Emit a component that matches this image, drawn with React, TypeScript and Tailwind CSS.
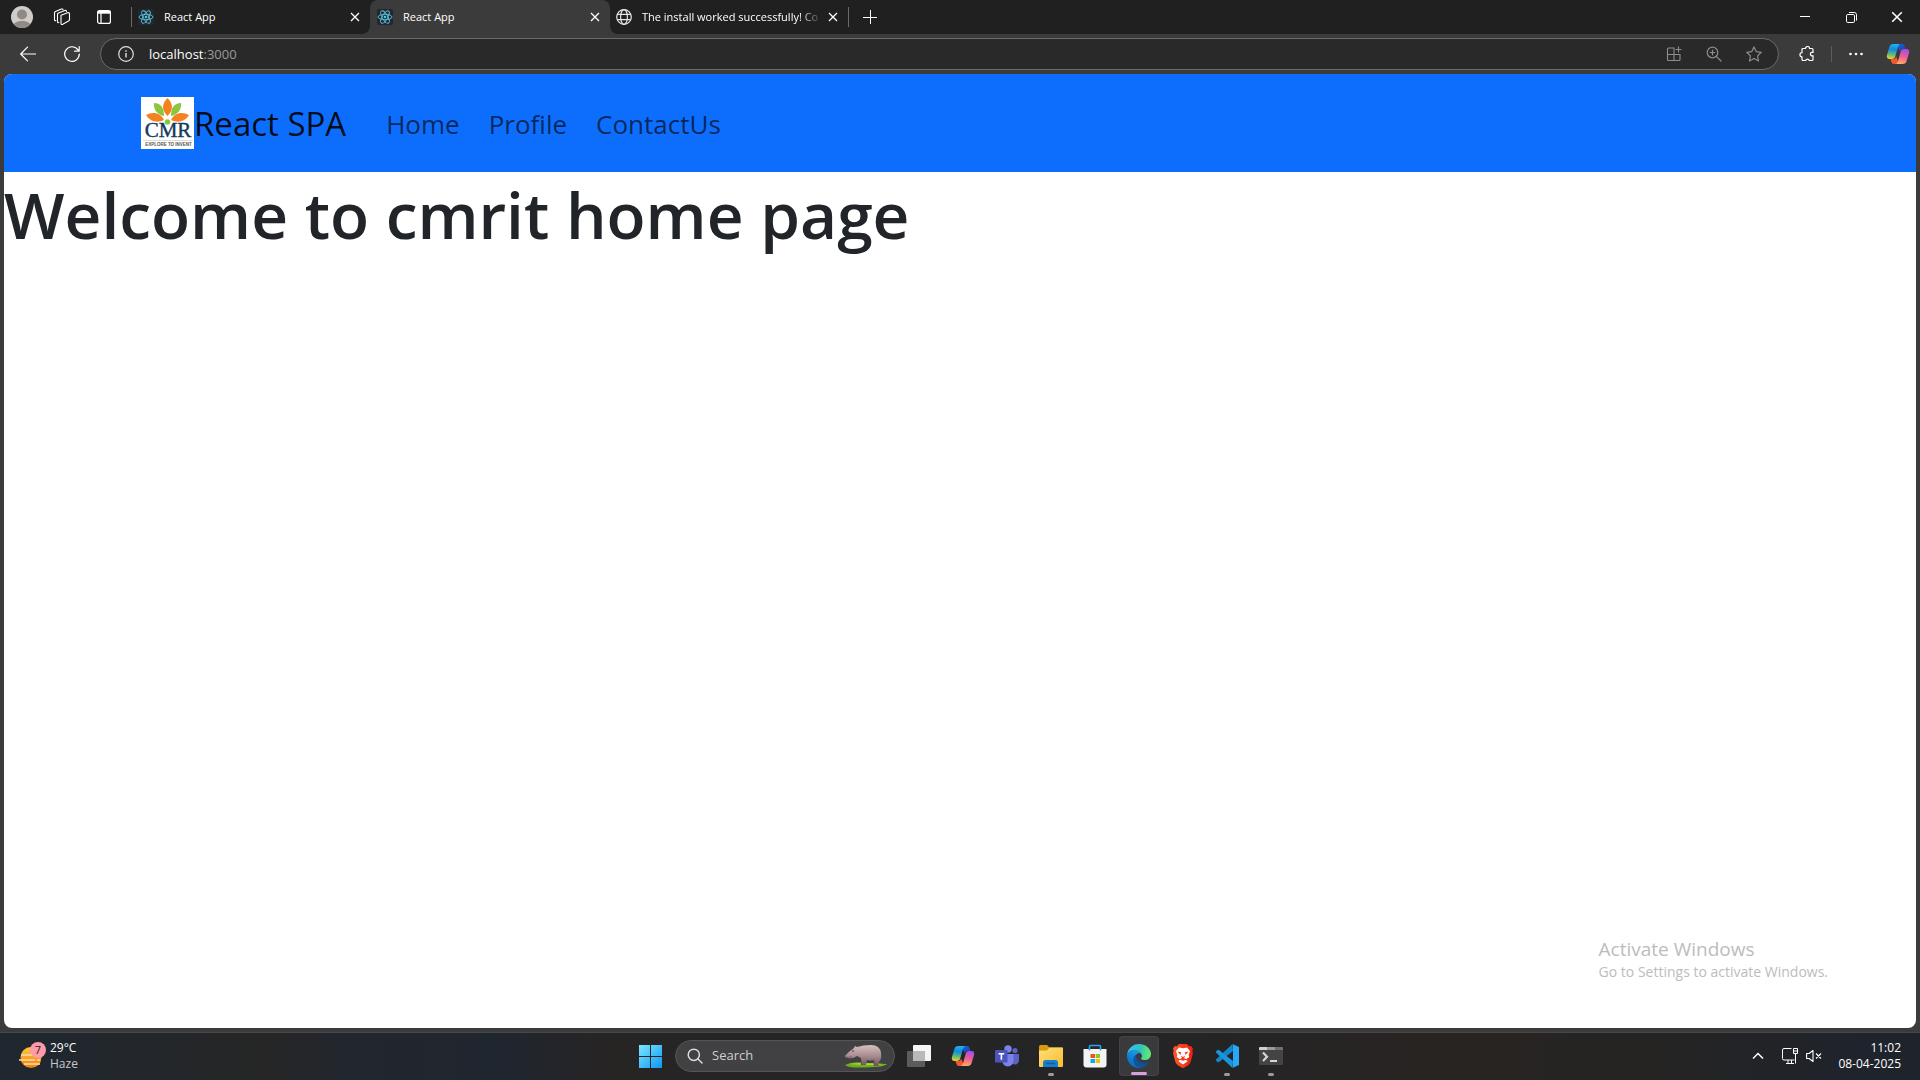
import React, { useState } from "react";

type IconProps = { className?: string };

function ReactLogo() {
  return (
    <svg viewBox="0 0 16 16" className="size-4 shrink-0" fill="none" stroke="#58c4dc" strokeWidth="0.9" aria-hidden="true">
      <rect width="16" height="16" rx="1.5" fill="#23272f" stroke="none" />
      <ellipse cx="8" cy="8" rx="7" ry="2.7" />
      <ellipse cx="8" cy="8" rx="7" ry="2.7" transform="rotate(60 8 8)" />
      <ellipse cx="8" cy="8" rx="7" ry="2.7" transform="rotate(120 8 8)" />
      <circle cx="8" cy="8" r="1.3" fill="#58c4dc" stroke="none" />
    </svg>
  );
}

function GlobeIcon() {
  return (
    <svg viewBox="0 0 16 16" className="size-4 shrink-0" fill="none" stroke="#e6e6e6" strokeWidth="1.2" aria-hidden="true">
      <circle cx="8" cy="8" r="7.3" />
      <ellipse cx="8" cy="8" rx="3.4" ry="7.3" />
      <path d="M1.4 5.4h13.2M1.4 10.6h13.2" />
    </svg>
  );
}

function CloseIcon({ className }: IconProps) {
  return (
    <svg viewBox="0 0 10 10" className={className} fill="none" stroke="currentColor" strokeWidth="1.3" aria-hidden="true">
      <path d="M1 1l8 8M9 1l-8 8" />
    </svg>
  );
}

function CopilotIcon({ className }: IconProps) {
  return (
    <svg viewBox="0 0 24 24" className={className} aria-hidden="true">
      <defs>
        <linearGradient id="cpA" x1="0.4" y1="0" x2="0.3" y2="1">
          <stop offset="0" stopColor="#19b4f2" />
          <stop offset="0.35" stopColor="#1488e0" />
          <stop offset="0.65" stopColor="#4cb58a" />
          <stop offset="1" stopColor="#f5d020" />
        </linearGradient>
        <linearGradient id="cpB" x1="0.6" y1="0" x2="0.4" y2="1">
          <stop offset="0" stopColor="#a04de8" />
          <stop offset="0.5" stopColor="#ee5c95" />
          <stop offset="1" stopColor="#ffab62" />
        </linearGradient>
        <linearGradient id="cpC" x1="0" y1="0" x2="1" y2="1">
          <stop offset="0" stopColor="#1a66d8" />
          <stop offset="1" stopColor="#1a3fae" />
        </linearGradient>
      </defs>
      <path d="M11 2h5.2c1.3 0 2 .7 2.4 2l.9 3h-2.4c-2 0-2.8.9-3.3 2.6L12 5z" fill="url(#cpC)" />
      <path d="M13 22H7.8c-1.3 0-2-.7-2.4-2l-.9-3h2.4c2 0 2.8-.9 3.3-2.6L12 19z" fill="#f2572f" />
      <path d="M7.5 2h7c-1.4.3-2 1.2-2.5 2.8L9.4 14c-.7 2.2-1.6 3-3.6 3H3.4C1.2 17 .4 15.300.9 13.300l2.400-8.100C4 3 5 2 7.500 2z" fill="url(#cpA)" />
      <path d="M16.500 22h-7c1.400-.3 2-1.200 2.500-2.800l2.600-9.200c.7-2.200 1.600-3 3.600-3h2.400c2.200 0 3 1.700 2.500 3.700l-2.400 8.100C20 21 19 22 16.500 22z" fill="url(#cpB)" />
    </svg>
  );
}

function TabFlare({ side }: { side: "left" | "right" }) {
  return (
    <svg
      viewBox="0 0 8 8"
      className={side === "left" ? "absolute right-full bottom-0 size-2" : "absolute bottom-0 left-full size-2"}
      fill="#3b3b3b"
      aria-hidden="true"
    >
      <path d={side === "left" ? "M8 0v8H0a8 8 0 0 0 8-8z" : "M0 0v8h8a8 8 0 0 1-8-8z"} />
    </svg>
  );
}

function BrowserTab({ title, icon, active = false, faded = false }: { title: string; icon: React.ReactNode; active?: boolean; faded?: boolean }) {
  return (
    <div
      className={
        active
          ? "relative flex h-full w-60 items-center gap-2.5 rounded-t-lg bg-[#3b3b3b] pr-[7px] pl-[7px]"
          : "flex h-full w-[238px] items-center gap-2.5 pr-[7px] pl-[6px]"
      }
    >
      {active && <TabFlare side="left" />}
      {icon}
      <span
        className={
          faded
            ? "flex-1 text-[11px] whitespace-nowrap text-white [mask-image:linear-gradient(to_right,black_calc(100%-24px),transparent)]"
            : "flex-1 text-[11px] whitespace-nowrap text-white"
        }
      >
        {title}
      </span>
      <button type="button" aria-label={`Close ${title}`} className="-ml-2 grid size-4 place-items-center text-white">
        <CloseIcon className="size-2.5" />
      </button>
      {active && <TabFlare side="right" />}
    </div>
  );
}

function TabStrip() {
  return (
    <div className="flex h-[34px] items-center bg-[#202020] text-white">
      <button type="button" aria-label="Profile" className="ml-[11px] grid place-items-center">
        <svg viewBox="0 0 22 22" className="size-[22px]" aria-hidden="true">
          <clipPath id="avatar"><circle cx="11" cy="11" r="11" /></clipPath>
          <g clipPath="url(#avatar)">
            <rect width="22" height="22" fill="#cfccc9" />
            <circle cx="11" cy="8.500" r="5" fill="#8f8a86" />
            <path d="M2 22c0-5 3-7 9-7s9 2 9 7z" fill="#8f8a86" />
          </g>
        </svg>
      </button>
      <button type="button" aria-label="Workspaces" className="ml-5 grid place-items-center">
        <svg viewBox="0 0 18 18" className="size-[18px]" fill="none" stroke="currentColor" strokeWidth="1.100" strokeLinejoin="round" strokeLinecap="round" aria-hidden="true">
          <path d="M8 7.200l6.500-2.500q2-.5 2 1.300v5.500q0 1-1 1.500l-5.700 3.300q-1.800.8-1.800-1z" />
          <path d="M5.800 14.600q-1.300.5-1.300-1V6.500q0-1 1-1.500l6.300-2.500q1.500-.4 1.700 1" />
          <path d="M2.800 12.600Q1.500 13 1.500 11.500V5q0-1 1-1.500l5.800-2.400q1.500-.5 1.800.8" />
        </svg>
      </button>
      <button type="button" aria-label="Tab actions menu" className="ml-[25px] grid place-items-center">
        <svg viewBox="0 0 16 16" className="size-4" fill="none" stroke="currentColor" strokeWidth="1.200" aria-hidden="true">
          <rect x="1.600" y="1.600" width="12.800" height="12.800" rx="2" />
          <path d="M1.600 3.200h12.800" strokeWidth="3" />
          <path d="M5 4v10" />
        </svg>
      </button>
      <span className="ml-[19px] h-5 w-px bg-[#6b6b6b]" />
      <BrowserTab title="React App" icon={<ReactLogo />} />
      <BrowserTab title="React App" icon={<ReactLogo />} active />
      <BrowserTab title="The install worked successfully! Co" icon={<GlobeIcon />} faded />
      <span className="h-5 w-px bg-[#6b6b6b]" />
      <button type="button" aria-label="New tab" className="ml-3.5 grid place-items-center">
        <svg viewBox="0 0 14 14" className="size-3.5" stroke="currentColor" strokeWidth="1" aria-hidden="true">
          <path d="M7.500 0v14M0 7.500h14" />
        </svg>
      </button>
      <div className="ml-auto flex h-full">
        <button type="button" aria-label="Minimize" className="grid w-[46px] place-items-center">
          <svg viewBox="0 0 10 10" className="size-2.5" stroke="currentColor" aria-hidden="true"><path d="M0 4.500h10" /></svg>
        </button>
        <button type="button" aria-label="Restore" className="grid w-[46px] place-items-center">
          <svg viewBox="0 0 11 11" className="size-[11px]" fill="none" stroke="currentColor" aria-hidden="true">
            <rect x="0.500" y="2.500" width="8" height="8" rx="1.300" />
            <path d="M3 .5h5.300q2.200 0 2.200 2.200V8.500" />
          </svg>
        </button>
        <button type="button" aria-label="Close window" className="grid w-[46px] place-items-center">
          <CloseIcon className="size-3" />
        </button>
      </div>
    </div>
  );
}

function Toolbar() {
  const [url, setUrl] = useState("localhost:3000");
  const [host, port] = url.split(/(?=:)/);
  return (
    <div className="flex h-10 items-center bg-[#3b3b3b] pl-5 text-white">
      <button type="button" aria-label="Back">
        <svg viewBox="0 0 16 16" className="size-4" fill="none" stroke="currentColor" strokeWidth="1.200" strokeLinecap="round" strokeLinejoin="round" aria-hidden="true">
          <path d="M15.500 8H.8M7.500 1.200L.7 8l6.800 6.800" />
        </svg>
      </button>
      <button type="button" aria-label="Refresh" className="ml-7">
        <svg viewBox="0 0 16 16" className="size-4" fill="none" stroke="currentColor" strokeWidth="1.200" strokeLinecap="round" strokeLinejoin="round" aria-hidden="true">
          <path d="M15.300 8A7.300 7.300 0 1 1 13.800 3.600L15 5M15.200.6V5.200H10.600" />
        </svg>
      </button>
      <div className="relative ml-5 flex h-8 flex-1 items-center rounded-full border border-[#6b6b6b] bg-[#292929] pr-4 pl-[17px]">
        <svg viewBox="0 0 16 16" className="size-4 shrink-0" fill="none" stroke="#e0e0e0" strokeWidth="1.200" aria-hidden="true">
          <circle cx="8" cy="8" r="7.300" />
          <path d="M8 7v4.500M8 4.300v1.400" strokeWidth="1.400" />
        </svg>
        <label className="relative ml-[15px] block h-5 flex-1 text-[13px] leading-5">
          <span className="pointer-events-none absolute inset-0 whitespace-pre">
            {host}
            <span className="text-[#9a9a9a]">{port}</span>
          </span>
          <input
            aria-label="Address"
            value={url}
            onChange={(e) => setUrl(e.target.value)}
            className="block w-full bg-transparent text-transparent caret-white outline-none"
          />
        </label>
        <div className="flex items-center gap-6 text-[#8d8d8d]">
          <button type="button" aria-label="App available">
            <svg viewBox="0 0 16 16" className="size-4" fill="none" stroke="currentColor" strokeWidth="1.100" aria-hidden="true">
              <path d="M8 8V2H2.500Q1.500 2 1.500 3v10.500q0 1 1 1H13q1 0 1-1V8.500H1.500M8 8v6.500M12.500 .5v6M9.500 3.500h6" />
            </svg>
          </button>
          <button type="button" aria-label="Zoom">
            <svg viewBox="0 0 16 16" className="size-4" fill="none" stroke="currentColor" strokeWidth="1.200" strokeLinecap="round" aria-hidden="true">
              <circle cx="6.500" cy="6.500" r="5.300" />
              <path d="M10.300 10.300l4.700 4.700M6.500 4.200v4.600M4.200 6.500h4.600" />
            </svg>
          </button>
          <button type="button" aria-label="Add to favorites">
            <svg viewBox="0 0 16 16" className="size-4" fill="none" stroke="currentColor" strokeWidth="1.200" strokeLinejoin="round" aria-hidden="true">
              <path d="M8 .9l2.200 4.700 5.100.7-3.700 3.600.9 5.200L8 12.600l-4.500 2.500.9-5.200L.7 6.300l5.100-.7z" />
            </svg>
          </button>
        </div>
      </div>
      <button type="button" aria-label="Extensions" className="ml-5">
        <svg viewBox="0 0 16 16" className="size-4" fill="none" stroke="currentColor" strokeWidth="1.200" strokeLinejoin="round" aria-hidden="true">
          <path d="M6.500 2.500a2 2 0 0 1 4 0h2.500q1 0 1 1v3a1.800 1.800 0 1 0 0 3.200v3.800q0 1-1 1h-2.700a1.900 1.900 0 0 0-3.600 0H4q-1 0-1-1v-2.700a2 2 0 0 1 0-4.100V3.500q0-1 1-1z" />
        </svg>
      </button>
      <span className="ml-4 h-4 w-px bg-[#5c5c5c]" />
      <button type="button" aria-label="Settings and more" className="ml-4">
        <svg viewBox="0 0 16 16" className="size-4" fill="currentColor" aria-hidden="true">
          <circle cx="2.500" cy="8" r="1.300" />
          <circle cx="8" cy="8" r="1.300" />
          <circle cx="13.500" cy="8" r="1.300" />
        </svg>
      </button>
      <button type="button" aria-label="Copilot" className="mr-2.5 ml-[22px]">
        <CopilotIcon className="size-6" />
      </button>
    </div>
  );
}

function CmrLogo() {
  return (
    <svg viewBox="0 0 53 52" className="h-[52px] w-[53px]" role="img" aria-label="CMR">
      <rect width="53" height="52" fill="#fff" />
      <path d="M13 6c7 0 10 5 10 13-6-1-11-6-10-13z" fill="#8cc63f" />
      <path d="M40 6c-7 0-10 5-10 13 6-1 11-6 10-13z" fill="#8cc63f" />
      <path d="M26.500 1c6 6 6 12 0 18-6-6-6-12 0-18z" fill="#f58220" />
      <path d="M5 18c7-4 15-2 18 5-7 3.500-14 1.500-18-5z" fill="#f58220" />
      <path d="M48 18c-7-4-15-2-18 5 7 3.500 14 1.500 18-5z" fill="#f58220" />
      <circle cx="26.500" cy="25" r="2.800" fill="#8cc63f" />
      <text x="27" y="40" textAnchor="middle" fontFamily="'Liberation Serif', serif" fontSize="21" fill="#123a5c" stroke="#123a5c" strokeWidth="0.400">CMR</text>
      <path d="M2 43.500h50" stroke="#e3c9b0" strokeWidth="0.700" />
      <text x="27.500" y="49" textAnchor="middle" fontFamily="'Liberation Sans', sans-serif" fontSize="4.500" fontWeight="700" fill="#555">EXPLORE TO INVENT</text>
    </svg>
  );
}

function Page() {
  return (
    <main className="relative mx-1 flex-1 overflow-hidden rounded-lg bg-white">
      <nav className="flex h-[98px] items-center bg-[#0d6efd] pl-[137px]">
        <a href="#home" className="flex items-center text-[33px] leading-[54px] text-black/90">
          <CmrLogo />
          <span className="pt-0.5">React SPA</span>
        </a>
        <ul className="ml-10 flex gap-[29px] pt-0.5 text-[26px] leading-10 text-black/65">
          <li><a href="#home">Home</a></li>
          <li><a href="#profile">Profile</a></li>
          <li><a href="#contact">ContactUs</a></li>
        </ul>
      </nav>
      <h1 className="text-[64px] leading-[86px] font-semibold text-[#212529]">Welcome to cmrit home page</h1>
      <aside className="absolute right-[88px] bottom-[45px] text-[#bcbcbc]">
        <p className="text-[19px] leading-6">Activate Windows</p>
        <p className="text-sm leading-[22px]">Go to Settings to activate Windows.</p>
      </aside>
    </main>
  );
}

function TaskButton({ label, running = false, active = false, children }: { label: string; running?: boolean; active?: boolean; children: React.ReactNode }) {
  return (
    <button
      type="button"
      aria-label={label}
      className={
        active
          ? "relative grid size-10 place-items-center rounded border border-white/5 bg-white/10"
          : "relative grid size-10 place-items-center"
      }
    >
      {children}
      {active && <span className="absolute bottom-0 left-1/2 h-[3px] w-4 -translate-x-1/2 rounded-full bg-[#d9a0e0]" />}
      {running && <span className="absolute bottom-0 left-1/2 h-[3px] w-1.5 -translate-x-1/2 rounded-full bg-[#9b9b9b]" />}
    </button>
  );
}

function WindowsIcon() {
  return (
    <svg viewBox="0 0 24 24" className="size-6" aria-hidden="true">
      <defs>
        <linearGradient id="win" x1="0" y1="0" x2="24" y2="24" gradientUnits="userSpaceOnUse">
          <stop offset="0" stopColor="#7ceaff" />
          <stop offset="1" stopColor="#0c94f5" />
        </linearGradient>
      </defs>
      <path d="M0 1h11v11H0zM12 1h11v11H12zM0 13h11v11H0zM12 13h11v11H12z" fill="url(#win)" />
    </svg>
  );
}

function HippoArt() {
  return (
    <svg viewBox="0 0 44 24" className="h-6 w-11" aria-hidden="true">
      <defs>
        <linearGradient id="hippo" x1="0" y1="0" x2="0" y2="1">
          <stop offset="0" stopColor="#d8bfbd" />
          <stop offset="0.500" stopColor="#a98f92" />
          <stop offset="1" stopColor="#6d5358" />
        </linearGradient>
      </defs>
      <path d="M1 21q8-4 20-2l22 1q-2 3-22 3.500Q3 24 1 21z" fill="#6fae1e" />
      <path d="M5 20q12-2 34 0-10 2-34 0z" fill="#a5d63a" />
      <path d="M29 14l1 8h3l1-9zM17 15v6h3l1-6z" fill="#5d464b" />
      <path d="M1 12Q4 8 10 4l1-2 2 1q6-2 14-2 9 0 10 8 1 6-2 9l-.5 4H31l-1-6q-4 1-7 0l-1 5h-4l-1-7-4-2q-4 3-9 2-4-1-3-3z" fill="url(#hippo)" />
      <circle cx="9" cy="7" r=".8" fill="#37282c" />
      <path d="M2 13q3 1 6-.5" stroke="#6d5358" strokeWidth=".7" fill="none" />
    </svg>
  );
}

function TaskViewIcon() {
  return (
    <svg viewBox="0 0 24 24" className="size-6" aria-hidden="true">
      <rect x="6" y="1" width="18" height="16" rx="1" fill="#f5f5f5" />
      <rect x="0" y="7" width="18" height="16" rx="1" fill="#5c5c5c" />
      <rect x="6" y="7" width="12" height="10" fill="#b9b9b9" />
    </svg>
  );
}

function TeamsIcon() {
  return (
    <svg viewBox="0 0 24 24" className="size-6" aria-hidden="true">
      <circle cx="20" cy="6.500" r="2.600" fill="#5b62c3" />
      <circle cx="13" cy="5" r="3.700" fill="#7b83eb" />
      <path d="M16 10h8v6q0 4-4 4.500-3 0-4-2z" fill="#5b62c3" />
      <path d="M7 10h11.500v6.500Q18 22 12.800 22.500 8 22 7 17z" fill="#7b83eb" />
      <rect x="0" y="6" width="12.500" height="12.500" rx="1.200" fill="#4b53bc" />
      <path d="M3.500 9.700h5.800M6.400 9.700v6" stroke="#fff" strokeWidth="1.600" />
    </svg>
  );
}

function FolderIcon() {
  return (
    <svg viewBox="0 0 24 24" className="size-6" aria-hidden="true">
      <defs>
        <linearGradient id="folder" x1="0" y1="0" x2="1" y2="1">
          <stop offset="0" stopColor="#ffe07a" />
          <stop offset="1" stopColor="#f8bd2c" />
        </linearGradient>
      </defs>
      <path d="M0 2.500Q0 1 1.500 1H8l2.500 2.500H23q1 0 1 1V8H0z" fill="#d99a0b" />
      <path d="M0 6.500h8L10.500 3.500H23q1 0 1 1V22q0 1-1 1H1q-1 0-1-1z" fill="url(#folder)" />
      <path d="M4 23v-4.500Q4 16 6.500 16h10q2.500 0 2.500 2.500V23z" fill="#1480cf" />
      <path d="M7 19.500h9" stroke="#0b5da5" strokeWidth="1.400" />
    </svg>
  );
}

function StoreIcon() {
  return (
    <svg viewBox="0 0 24 24" className="size-6" aria-hidden="true">
      <path d="M.5 5h23v15.500q0 3-3 3h-17q-3 0-3-3z" fill="#f3f3f3" />
      <path d="M6.500 6.500V2.500q0-1 1-1h9q1 0 1 1v4" fill="none" stroke="#22a7e8" strokeWidth="1.600" />
      <path d="M7.500 10H12v4H7.500z" fill="#f1511b" />
      <path d="M12.700 10H17v4h-4.300z" fill="#80cc28" />
      <path d="M7.500 15H12v4H7.500z" fill="#00adef" />
      <path d="M12.700 15H17v4h-4.300z" fill="#fbbc09" />
    </svg>
  );
}

function EdgeIcon() {
  return (
    <svg viewBox="0 0 256 256" className="size-6" aria-hidden="true">
      <defs>
        <linearGradient id="edgeA" x1="60" y1="180" x2="240" y2="180" gradientUnits="userSpaceOnUse">
          <stop offset="0" stopColor="#0c59a4" />
          <stop offset="1" stopColor="#114a8b" />
        </linearGradient>
        <linearGradient id="edgeB" x1="140" y1="90" x2="40" y2="240" gradientUnits="userSpaceOnUse">
          <stop offset="0" stopColor="#1b9de2" />
          <stop offset="1" stopColor="#0a68be" />
        </linearGradient>
        <linearGradient id="edgeC" x1="10" y1="60" x2="250" y2="110" gradientUnits="userSpaceOnUse">
          <stop offset="0" stopColor="#35c1f1" />
          <stop offset="0.500" stopColor="#2fc2b8" />
          <stop offset="1" stopColor="#66eb6e" />
        </linearGradient>
      </defs>
      <path fill="url(#edgeA)" d="M231 190.500c-3.400 1.800-6.900 3.400-10.500 4.700a101.900 101.900 0 0 1-35.900 6.400c-47.300 0-88.500-32.500-88.500-74.300a31.500 31.500 0 0 1 16.400-27.300c-42.800 1.800-53.800 46.400-53.800 72.500 0 73.900 68.100 81.400 82.800 81.400 7.900 0 19.800-2.300 27-4.600l1.300-.4a128.300 128.300 0 0 0 66.600-52.800 4 4 0 0 0-5.400-5.600z" />
      <path fill="url(#edgeB)" d="M105.700 241.400a79.200 79.200 0 0 1-22.700-21.300 80.700 80.700 0 0 1 29.500-120c3.200-1.500 8.500-4.100 15.600-4a32.400 32.400 0 0 1 25.700 13 31.900 31.900 0 0 1 6.300 18.700c0-.2 24.500-79.600-80-79.600C36.200 48.200 0 90 0 126.700a130.500 130.500 0 0 0 12.100 56 128 128 0 0 0 156.400 67 75.500 75.500 0 0 1-62.800-8.300z" />
      <path fill="url(#edgeC)" d="M152.300 148.900c-.8 1-3.300 2.500-3.300 5.700 0 2.600 1.700 5.200 4.700 7.300 14.600 10.100 42 8.800 42.100 8.800a60.300 60.300 0 0 0 30.700-8.500A62.400 62.400 0 0 0 256 109.600c.3-22.400-8-37.300-11.300-43.900C223.500 24.200 177.700 0 128 0A128 128 0 0 0 0 126.200c.5-36.500 36.800-66 80-66 3.500 0 23.500.3 42 10.100 16.300 8.500 24.900 18.800 30.800 29.100 6.200 10.700 7.300 24.200 7.300 29.600 0 5.400-2.700 13.300-7.800 19.900z" />
    </svg>
  );
}

function BraveIcon() {
  return (
    <svg viewBox="0 0 24 24" className="size-6" aria-hidden="true">
      <defs>
        <linearGradient id="brave" x1="0" y1="0" x2="1" y2="0">
          <stop offset="0" stopColor="#ff5a2a" />
          <stop offset="1" stopColor="#f0200c" />
        </linearGradient>
      </defs>
      <path d="M8 0h8l2.200 2.200 2-.3L22 4.700 21.300 7l.7 2-2.400 9q-.6 2-2.400 3.200L12 24.300l-5.200-3.100Q5 20 4.400 18L2 9l.7-2L2 4.700l1.800-2.800 2 .3z" fill="url(#brave)" />
      <path d="M8 3.600l4 .7 4-.7L19 7l-1.300 4 .5 2-3.400 2.600 1.800 1.600L12 20.500l-4.600-3.300 1.800-1.600L5.800 13l.5-2L5 7z" fill="#fff" />
      <path d="M6.500 7.500l3.700.8-.7 2.600zM17.500 7.500l-3.700.8.7 2.600zM12 13l-2.300-1.500L11 14l-3 1.500 4 1.200 4-1.200-3-1.500 1.300-2.500z" fill="#f73b1c" />
    </svg>
  );
}

function CodeIcon() {
  return (
    <svg viewBox="0 0 24 24" className="size-6" aria-hidden="true">
      <path d="M17.500 0L1.200 15.200q-.8.800 0 1.600l1.300 1.200q.8.600 1.600 0L18 7z" fill="#1387ce" />
      <path d="M17.500 24L1.200 8.800q-.8-.8 0-1.600L2.500 6q.8-.6 1.600 0L18 17z" fill="#1b93dd" />
      <path d="M17.500 0L24 3v18l-6.500 3q.5-.5.500-1.500v-21q0-1-.5-1.500z" fill="#2ba6f0" />
    </svg>
  );
}

function TerminalIcon() {
  return (
    <svg viewBox="0 0 24 24" className="size-6" aria-hidden="true">
      <rect x="0" y="3" width="24" height="18" rx="1" fill="#444" />
      <path d="M0 6V4q0-1 1-1h7v3z" fill="#d0d0d0" />
      <path d="M8 3h8v3H8z" fill="#9a9a9a" />
      <path d="M16 3h7q1 0 1 1v2h-8z" fill="#707070" />
      <path d="M4 8.500l4 4.200-4 4.200" fill="none" stroke="#d5d5d5" strokeWidth="2.200" />
      <path d="M11 17h7" stroke="#fff" strokeWidth="1.600" />
    </svg>
  );
}

function WeatherIcon() {
  return (
    <svg viewBox="0 0 28 28" className="size-7" aria-hidden="true">
      <defs>
        <linearGradient id="sun" x1="0" y1="0" x2="0" y2="1">
          <stop offset="0" stopColor="#ffc83d" />
          <stop offset="1" stopColor="#f57c10" />
        </linearGradient>
      </defs>
      <circle cx="13" cy="15.500" r="10.500" fill="url(#sun)" />
      <path d="M3 13h13M1 18h16M6 22h16M14 10h8M19 18h3" stroke="#f7dfae" strokeWidth="1.600" />
      <circle cx="20" cy="8" r="8" fill="#ff9aa8" />
      <text x="20" y="12" textAnchor="middle" fontFamily="'Open Sans', sans-serif" fontSize="11" fill="#1c1c1c">7</text>
    </svg>
  );
}

function Taskbar() {
  return (
    <footer className="mt-1 grid h-12 grid-cols-[1fr_auto_1fr] items-center border-t border-[#474747] bg-[linear-gradient(to_right,#1f2730_0%,#262626_14%,#22262e_18%,#20262f_26%,#272424_32%,#242426_60%,#282422_75%,#252423_86%,#1f232c_97%)] pb-0.5 text-white">
      <button type="button" className="flex items-center gap-1 justify-self-start pl-[18px] text-left text-xs leading-4">
        <WeatherIcon />
        <span>
          <span className="block">29°C</span>
          <span className="block text-[#c5c8cc]">Haze</span>
        </span>
      </button>
      <div className="flex items-center gap-1 pl-0.5">
        <TaskButton label="Start"><WindowsIcon /></TaskButton>
        <label className="flex h-8 w-[220px] items-center rounded-full border border-[#555] bg-[#414042] pr-1.5 pl-[11px]">
          <svg viewBox="0 0 16 16" className="size-4 shrink-0" fill="none" stroke="#dcdcdc" strokeWidth="1.500" strokeLinecap="round" aria-hidden="true">
            <circle cx="6.800" cy="6.800" r="5.600" />
            <path d="M11 11l4 4" />
          </svg>
          <input
            type="search"
            aria-label="Search"
            placeholder="Search"
            className="ml-[9px] w-full min-w-0 flex-1 bg-transparent text-[13px] text-white outline-none placeholder:text-[#cfcfcf]"
          />
          <HippoArt />
        </label>
        <TaskButton label="Task view"><TaskViewIcon /></TaskButton>
        <TaskButton label="Copilot"><CopilotIcon className="size-6" /></TaskButton>
        <TaskButton label="Microsoft Teams"><TeamsIcon /></TaskButton>
        <TaskButton label="File Explorer" running><FolderIcon /></TaskButton>
        <TaskButton label="Microsoft Store"><StoreIcon /></TaskButton>
        <TaskButton label="Microsoft Edge" active><EdgeIcon /></TaskButton>
        <TaskButton label="Brave"><BraveIcon /></TaskButton>
        <TaskButton label="Visual Studio Code" running><CodeIcon /></TaskButton>
        <TaskButton label="Terminal" running><TerminalIcon /></TaskButton>
      </div>
      <div className="flex items-center justify-self-end pr-[19px]">
        <button type="button" aria-label="Show hidden icons">
          <svg viewBox="0 0 12 12" className="size-3" fill="none" stroke="currentColor" strokeWidth="1.500" aria-hidden="true"><path d="M1 8.500l5-5 5 5" /></svg>
        </button>
        <button type="button" aria-label="Network and volume" className="ml-[18px] flex items-center gap-2">
          <svg viewBox="0 0 16 16" className="size-4" fill="none" stroke="currentColor" strokeWidth="1" aria-hidden="true">
            <path d="M9.500 .5H2Q.5.500.5 2v8.500Q.5 12 2 12h10.500M4 15.500h8M6 12v3.500M9.500 12v3.500M11.500 .5h4v5h-4zM11.500 3h4M13.500 5.500v10" />
          </svg>
          <svg viewBox="0 0 16 16" className="size-4" fill="none" stroke="currentColor" strokeWidth="1.100" strokeLinejoin="round" aria-hidden="true">
            <path d="M.6 5.500h2.500L7 2.500v11l-3.900-3H.6zM10 5.500l5 5M15 5.500l-5 5" />
          </svg>
        </button>
        <button type="button" className="ml-4 text-right text-xs leading-4">
          <span className="block">11:02</span>
          <span className="block">08-04-2025</span>
        </button>
      </div>
    </footer>
  );
}

export default function App() {
  return (
    <div className="flex min-h-screen flex-col bg-[#3b3b3b] font-['Open_Sans',sans-serif]">
      <TabStrip />
      <Toolbar />
      <Page />
      <Taskbar />
    </div>
  );
}
